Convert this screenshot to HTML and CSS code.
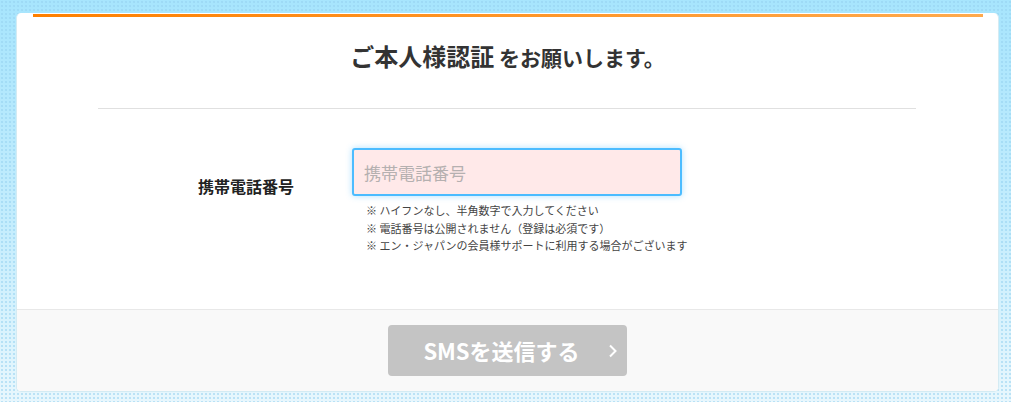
FILE: index.html
```html
<!DOCTYPE html>
<html lang="ja">
<head>
    <meta charset="UTF-8">
    <meta name="viewport" content="width=device-width, initial-scale=1.0">
    <title>ご本人様認証</title>
    <link rel="stylesheet" href="styles.css">
</head>
<body>
    <div class="card">
        <div class="bar"></div>
        <h1 class="title"><span class="big">ご本人様認証</span> をお願いします。</h1>
        <hr class="divider">
        <div class="form-row">
            <label class="label" for="tel">携帯電話番号</label>
            <div class="field">
                <input class="input" type="tel" id="tel" placeholder="携帯電話番号" autofocus>
                <ul class="notes">
                    <li>※ ハイフンなし、半角数字で入力してください</li>
                    <li>※ 電話番号は公開されません（登録は必須です）</li>
                    <li>※ エン・ジャパンの会員様サポートに利用する場合がございます</li>
                </ul>
            </div>
        </div>
        <div class="footer">
            <button class="btn" type="button">SMSを送信する
                <svg class="chevron" width="10" height="14" viewBox="0 0 10 14"><polyline points="2,1.5 7.5,7 2,12.5" fill="none" stroke="#fff" stroke-width="2"/></svg>
            </button>
        </div>
    </div>
</body>
</html>
```

FILE: styles.css
```css
body {
    margin: 0;
    padding: 13px 12px 12px 16px;
    font-family: "Noto Sans CJK JP", "Noto Sans", sans-serif;
    color: #333;
    background-color: #c6ecfc;
    background-image:
        radial-gradient(circle, rgba(150, 210, 240, 0.55) 0.8px, transparent 1.2px),
        linear-gradient(180deg, #a7e5fd 0%, #c4edfd 55%, #e8f7fd 100%);
    background-size: 4px 4px, 100% 100%;
    min-height: 402px;
    box-sizing: border-box;
}
.card {
    background: #fff;
    border-radius: 5px;
    border: 1px solid #d4ebf3;
    border-top: none;
    overflow: hidden;
}
.bar {
    height: 3px;
    margin: 1px 15px 0 16px;
    background: linear-gradient(90deg, #ff8000, #ffaa4d);
}
.title {
    margin: 22px 0 0;
    text-align: center;
    font-size: 21px;
    font-weight: bold;
    line-height: 34px;
    color: #333;
}
.big {
    font-size: 24px;
}
.divider {
    margin: 34px 82px 0 81px;
    border: none;
    border-top: 1px solid #e0e0e0;
}
.form-row {
    display: grid;
    grid-template-columns: 154px 330px;
    padding: 39px 0 54px 181px;
}
.label {
    padding-top: 26px;
    font-size: 16px;
    font-weight: bold;
    line-height: 24px;
    color: #222;
}
.input {
    display: block;
    width: 330px;
    height: 48px;
    box-sizing: border-box;
    border: 2px solid #4cbcff;
    border-radius: 3px;
    background: #ffe9e9;
    padding: 0 10px;
    font-family: inherit;
    font-size: 17px;
    color: #333;
    outline: none;
    box-shadow: 0 0 6px rgba(76, 188, 255, 0.45);
}
.input::placeholder {
    color: #b5b0b0;
}
.notes {
    list-style: none;
    margin: 6px 0 0 14px;
    padding: 0;
    font-size: 11px;
    line-height: 17.5px;
    color: #444;
    white-space: nowrap;
}
.footer {
    background: #f9f9f9;
    border-top: 1px solid #e8e8e8;
    padding: 15px 0 15px;
    display: flex;
    justify-content: center;
}
.btn {
    position: relative;
    width: 239px;
    height: 51px;
    border: none;
    border-radius: 4px;
    background: #c4c4c4;
    color: #fff;
    font-family: inherit;
    font-size: 22px;
    font-weight: bold;
    padding: 0 12px 0 0;
    cursor: pointer;
}
.chevron {
    position: absolute;
    right: 9px;
    top: 19px;
}
```
